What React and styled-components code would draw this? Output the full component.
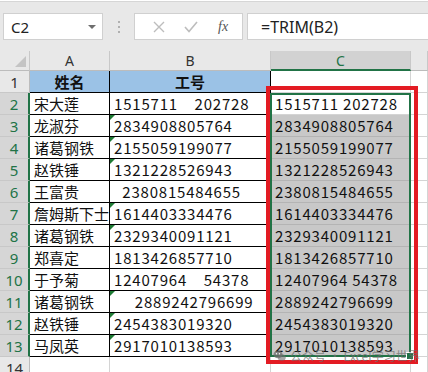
import React from 'react';
import styled, { createGlobalStyle } from 'styled-components';

const GlobalStyle = createGlobalStyle`
  html, body {
    margin: 0;
    padding: 0;
    background: #ffffff;
  }
  body {
    width: 428px;
    height: 372px;
    overflow: hidden;
    font-family: "Noto Sans CJK SC", "Noto Sans", sans-serif;
  }
`;

const Page = styled.div`
  width: 428px;
  height: 372px;
  display: flex;
  flex-direction: column;
  overflow: hidden;
`;

// formula bar strip
const Toolbar = styled.div`
  height: 50px;
  box-sizing: border-box;
  background: #e8e8e8;
  border-top: 1px solid #d6d6d6;
  margin-top: 1px;
  display: flex;
  align-items: center;
  padding: 0 0 0 3px;
  flex-shrink: 0;
`;

const NameBox = styled.div`
  width: 100px;
  height: 27px;
  box-sizing: border-box;
  background: #fff;
  border: 1px solid #d0d0d0;
  display: flex;
  align-items: center;
  justify-content: space-between;
  padding: 0 6px 0 7px;
  font-family: "Noto Sans", sans-serif;
  font-size: 15px;
  color: #222;
`;

const DropArrow = styled.span`
  width: 0;
  height: 0;
  border-left: 4px solid transparent;
  border-right: 4px solid transparent;
  border-top: 4px solid #6e6e6e;
`;

const Grip = styled.div`
  width: 31px;
  display: flex;
  flex-direction: column;
  align-items: center;
  gap: 3px;
`;

const GripDot = styled.span`
  width: 2px;
  height: 2px;
  background: #b0b0b0;
`;

const ButtonBox = styled.div`
  width: 109px;
  height: 27px;
  box-sizing: border-box;
  background: #fff;
  border: 1px solid #d0d0d0;
  display: flex;
  align-items: center;
  justify-content: space-around;
  padding: 0 4px 0 8px;
`;

const FxText = styled.span`
  font-family: "Liberation Serif", serif;
  font-style: italic;
  font-size: 14px;
  color: #555;
`;

const FormulaInput = styled.div`
  flex: 1;
  height: 27px;
  margin-left: 4px;
  box-sizing: border-box;
  background: #fff;
  border: 1px solid #d0d0d0;
  border-right: none;
  display: flex;
  align-items: center;
  padding-left: 13px;
  font-family: "Noto Sans", sans-serif;
  font-size: 16px;
  color: #222;
`;

// sheet grid
const SheetWrap = styled.div`
  position: relative;
  flex: 1;
`;

const Sheet = styled.div`
  display: grid;
  grid-template-columns: 30px 80px 161px 140px 17px;
  grid-template-rows: 20px repeat(13, 22px) 22px;
`;

const Corner = styled.div`
  background: #e8e8e8;
  border-right: 1px solid #c8c8c8;
  border-bottom: 1px solid #bcbcbc;
  box-sizing: border-box;
  position: relative;
  &::after {
    content: '';
    position: absolute;
    right: 3px;
    bottom: 3px;
    border-left: 11px solid transparent;
    border-bottom: 11px solid #c4c4c4;
  }
`;

const ColHead = styled.div`
  box-sizing: border-box;
  background: ${(p) => (p.$active ? '#d2d2d2' : '#e8e8e8')};
  color: ${(p) => (p.$active ? '#217346' : '#333')};
  border-right: 1px solid #c8c8c8;
  border-bottom: ${(p) => (p.$active ? '2px solid #217346' : '1px solid #bcbcbc')};
  display: flex;
  align-items: center;
  justify-content: center;
  font-family: "Noto Sans", sans-serif;
  font-size: 14px;
`;

const RowHead = styled.div`
  box-sizing: border-box;
  background: ${(p) => (p.$active ? '#d6d6d6' : '#e8e8e8')};
  color: ${(p) => (p.$active ? '#217346' : '#333')};
  border-right: ${(p) => (p.$active ? '2px solid #217346' : '1px solid #bcbcbc')};
  border-bottom: 1px solid #c8c8c8;
  display: flex;
  align-items: center;
  justify-content: center;
  font-family: "Noto Sans", sans-serif;
  font-size: 15px;
`;

const Cell = styled.div`
  box-sizing: border-box;
  position: relative;
  background: ${(p) => p.$bg || '#fff'};
  border-right: 1px solid ${(p) => p.$line || '#d4d4d4'};
  border-bottom: 1px solid ${(p) => p.$line || '#d4d4d4'};
  display: flex;
  align-items: center;
  justify-content: ${(p) => (p.$center ? 'center' : 'flex-start')};
  padding-left: ${(p) => (p.$center ? '0' : '4px')};
  font-size: 15px;
  letter-spacing: ${(p) => (p.$num ? '0.8px' : '0')};
  font-weight: ${(p) => (p.$bold ? 700 : 400)};
  color: #111;
  white-space: pre;
  overflow: hidden;

  ${(p) =>
    p.$flag &&
    `&::before {
      content: '';
      position: absolute;
      left: 0;
      top: 0;
      border-right: 5px solid transparent;
      border-top: 5px solid #1e7b34;
    }`}
`;

// overlays
const Selection = styled.div`
  position: absolute;
  left: 270px;
  top: 42px;
  width: 141px;
  height: 264px;
  box-sizing: border-box;
  border: 2px solid #217346;
  pointer-events: none;
`;

const FillHandle = styled.span`
  position: absolute;
  right: -5px;
  bottom: -5px;
  width: 6px;
  height: 6px;
  background: #217346;
  border: 1px solid #fff;
`;

const RedFrame = styled.div`
  position: absolute;
  left: 266px;
  top: 35px;
  width: 152px;
  height: 278px;
  box-sizing: border-box;
  border: 4px solid #e31b23;
  pointer-events: none;
`;

const Watermark = styled.div`
  position: absolute;
  left: 273px;
  top: 296px;
  display: flex;
  align-items: center;
  gap: 4px;
  font-size: 12px;
  color: rgba(110, 110, 110, 0.75);
  pointer-events: none;
  white-space: nowrap;
`;

const rows = [
  ['宋大莲', '1515711    202728', false],
  ['龙淑芬', '2834908805764', true],
  ['诸葛钢铁', '2155059199077', true],
  ['赵铁锤', '1321228526943', true],
  ['王富贵', '  2380815484655', false],
  ['詹姆斯下士', '1614403334476', true],
  ['诸葛钢铁', '2329340091121', true],
  ['郑喜定', '1813426857710', false],
  ['于予菊', '12407964    54378', false],
  ['诸葛钢铁', '     2889242796699', true],
  ['赵铁锤', '2454383019320', true],
  ['马凤英', '2917010138593', true],
];

const trim = (s) => s.trim().replace(/\s+/g, ' ');

function WeChatIcon() {
  return (
    <svg width="13" height="12" viewBox="0 0 26 24">
      <ellipse cx="10" cy="9" rx="9" ry="7.5" fill="currentColor" />
      <ellipse cx="17.5" cy="15" rx="8" ry="6.5" fill="currentColor" opacity="0.8" />
      <circle cx="7" cy="7.5" r="1.3" fill="#fff" />
      <circle cx="13" cy="7.5" r="1.3" fill="#fff" />
    </svg>
  );
}

export default function App() {
  return (
    <Page>
      <GlobalStyle />
      <Toolbar>
        <NameBox>
          C2
          <DropArrow />
        </NameBox>
        <Grip>
          <GripDot />
          <GripDot />
          <GripDot />
        </Grip>
        <ButtonBox>
          <svg width="12" height="12" viewBox="0 0 12 12">
            <path d="M1 1 L11 11 M11 1 L1 11" stroke="#bdbdbd" strokeWidth="1.4" fill="none" />
          </svg>
          <svg width="14" height="12" viewBox="0 0 14 12">
            <path d="M1 6 L5 10.5 L13 1" stroke="#bdbdbd" strokeWidth="1.6" fill="none" />
          </svg>
          <FxText>fx</FxText>
        </ButtonBox>
        <FormulaInput>=TRIM(B2)</FormulaInput>
      </Toolbar>

      <SheetWrap>
        <Sheet>
          <Corner />
          <ColHead>A</ColHead>
          <ColHead>B</ColHead>
          <ColHead $active>C</ColHead>
          <ColHead />

          <RowHead>1</RowHead>
          <Cell $bg="#9bc2e6" $line="#000" $center $bold>姓名</Cell>
          <Cell $bg="#9bc2e6" $line="#000" $center $bold>工号</Cell>
          <Cell />
          <Cell />

          {rows.map(([name, id, flag], i) => (
            <React.Fragment key={i}>
              <RowHead $active>{i + 2}</RowHead>
              <Cell $line="#000">{name}</Cell>
              <Cell $line="#000" $flag={flag} $num>{id}</Cell>
              <Cell
                $num
                $bg={i === 0 ? '#fff' : '#c8c8c8'}
                $line={i === 0 ? '#d4d4d4' : '#b4b4b4'}
              >
                {trim(id)}
              </Cell>
              <Cell />
            </React.Fragment>
          ))}

          <RowHead>14</RowHead>
          <Cell />
          <Cell />
          <Cell />
          <Cell />
        </Sheet>

        <Selection>
          <FillHandle />
        </Selection>
        <RedFrame />
        <Watermark>
          <WeChatIcon />
          公众号 · Excel学习世界
        </Watermark>
      </SheetWrap>
    </Page>
  );
}
